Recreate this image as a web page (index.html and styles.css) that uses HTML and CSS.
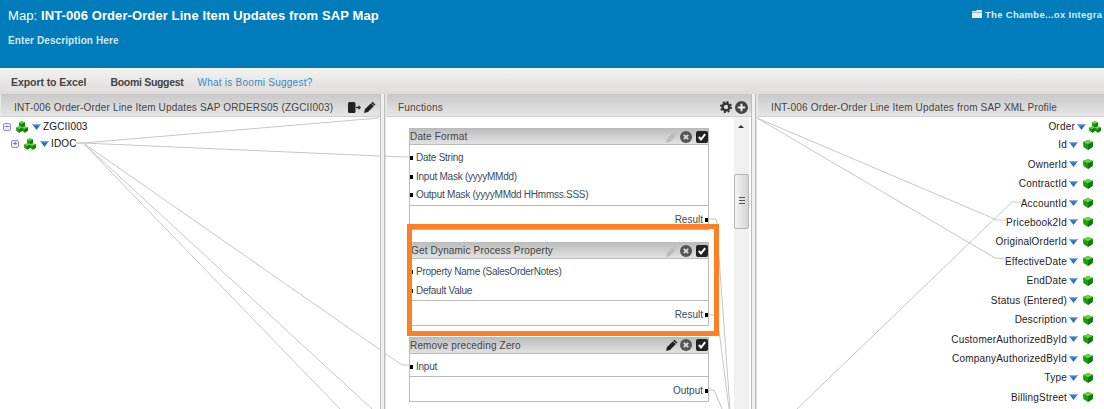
FILE: index.html
```html
<!DOCTYPE html>
<html lang="en">

<head>
    <meta charset="UTF-8">
    <meta name="viewport" content="width=device-width, initial-scale=1.0">
    <title>Map</title>
    <link rel="stylesheet" href="styles.css">
</head>

<body>
    <svg class="icon-defs" width="0" height="0">
        <symbol id="cube" viewBox="0 0 10 10">
            <path d="M5 0 10 2 9.6 7 5 10 .4 7 0 2Z" fill="#1c9a10" />
            <path d="M5 0 10 2 5 4.2 0 2Z" fill="#62d63a" />
            <path d="M10 2 5 4.2V10L9.6 7Z" fill="#0d7a0d" />
        </symbol>
        <symbol id="cubes" viewBox="0 0 12 12">
            <use href="#cube" x="2.75" y="0" width="6.5" height="7" />
            <use href="#cube" x="0" y="5" width="6.5" height="7" />
            <use href="#cube" x="5.5" y="5" width="6.5" height="7" />
        </symbol>
        <symbol id="arrow" viewBox="0 0 9 6">
            <path d="M0 0H9L4.5 6Z" fill="#2f72c4" />
            <path d="M0 0H9L8 1.2H1Z" fill="#7fb0e8" />
        </symbol>
        <symbol id="pencil" viewBox="0 0 12 12">
            <path d="M0 12 1 8 8.5 .8 11.4 3.6 4 11Z" fill="currentColor" />
            <path d="M7.3 2.2 10 4.8" stroke="#ddd" stroke-width=".8" />
        </symbol>
        <symbol id="cross" viewBox="0 0 12 12">
            <circle cx="6" cy="6" r="6" fill="#555" />
            <path d="M3.8 3.8 8.2 8.2M8.2 3.8 3.8 8.2" stroke="#ddd" stroke-width="1.8" />
        </symbol>
        <symbol id="check" viewBox="0 0 12 12">
            <rect width="12" height="12" rx="2" fill="#222" />
            <path d="M2.8 6 5 8.4 9.2 3.2" stroke="#fff" stroke-width="2" fill="none" />
        </symbol>
        <symbol id="gear" viewBox="0 0 12 12">
            <circle cx="6" cy="6" r="3.4" fill="none" stroke="#333" stroke-width="2.4" />
            <circle cx="6" cy="6" r="5" fill="none" stroke="#333" stroke-width="2" stroke-dasharray="2 1.93" />
        </symbol>
        <symbol id="plus" viewBox="0 0 12 12">
            <circle cx="6" cy="6" r="6" fill="#444" />
            <path d="M6 2.6V9.4M2.6 6H9.4" stroke="#eee" stroke-width="1.8" />
        </symbol>
        <symbol id="export" viewBox="0 0 13 11">
            <rect width="7.5" height="11" rx="1.5" fill="#222" />
            <path d="M8 5.5H11" stroke="#222" stroke-width="1.4" />
            <path d="M10.5 3 13 5.5 10.5 8Z" fill="#222" />
        </symbol>
    </svg>

    <header class="top-bar">
        <div class="top-text">
            <h1 class="map-title">Map: <b>INT-006 Order-Order Line Item Updates from SAP Map</b></h1>
            <p class="map-desc">Enter Description Here</p>
        </div>
        <div class="account">
            <svg class="account-icon" viewBox="0 0 10 9" width="10" height="9">
                <path d="M0 1H4L5 0H10V8H0Z" fill="#e6eef3" />
                <path d="M0 2.5H10" stroke="#7d9db0" stroke-width=".7" />
            </svg>
            <span>The Chambe...ox Integra</span>
        </div>
    </header>

    <nav class="tool-bar">
        <span class="tool tool-export">Export to Excel</span>
        <span class="tool tool-suggest">Boomi Suggest</span>
        <span class="tool-link">What is Boomi Suggest?</span>
    </nav>

    <main class="panes">
        <section class="pane pane-left">
            <div class="pane-head">
                <span>INT-006 Order-Order Line Item Updates SAP ORDERS05 (ZGCII003)</span>
                <span class="head-icons">
                    <svg class="i-export"><use href="#export" /></svg>
                    <svg class="i-head pencil-dark"><use href="#pencil" /></svg>
                </span>
            </div>
            <div class="tree">
                <div class="tree-row">
                    <span class="toggle">&minus;</span>
                    <svg class="i-cubes"><use href="#cubes" /></svg>
                    <svg class="i-arrow"><use href="#arrow" /></svg>
                    <span>ZGCII003</span>
                </div>
                <div class="tree-row tree-child">
                    <span class="toggle toggle-plus">+</span>
                    <svg class="i-cubes"><use href="#cubes" /></svg>
                    <svg class="i-arrow"><use href="#arrow" /></svg>
                    <span>IDOC</span>
                </div>
            </div>
        </section>

        <div class="splitter"></div>

        <section class="pane pane-center">
            <div class="pane-head">
                <span>Functions</span>
                <span class="head-icons">
                    <svg class="i-head"><use href="#gear" /></svg>
                    <svg class="i-head i-plus"><use href="#plus" /></svg>
                </span>
            </div>
            <div class="center-body">
                <div class="functions">
                    <div class="fn-card">
                        <div class="fn-head">
                            <span>Date Format</span>
                            <svg class="i-btn pencil-faded"><use href="#pencil" /></svg>
                            <svg class="i-btn"><use href="#cross" /></svg>
                            <svg class="i-btn"><use href="#check" /></svg>
                        </div>
                        <div class="fn-inputs">
                            <div class="fn-row">Date String</div>
                            <div class="fn-row">Input Mask (yyyyMMdd)</div>
                            <div class="fn-row">Output Mask (yyyyMMdd HHmmss.SSS)</div>
                        </div>
                        <div class="fn-outputs">
                            <div class="fn-row">Result</div>
                        </div>
                    </div>

                    <div class="fn-card fn-card-property">
                        <div class="fn-head fn-head-tight">
                            <span>Get Dynamic Process Property</span>
                            <svg class="i-btn pencil-faded"><use href="#pencil" /></svg>
                            <svg class="i-btn"><use href="#cross" /></svg>
                            <svg class="i-btn"><use href="#check" /></svg>
                        </div>
                        <div class="fn-inputs">
                            <div class="fn-row">Property Name (SalesOrderNotes)</div>
                            <div class="fn-row">Default Value</div>
                        </div>
                        <div class="fn-outputs">
                            <div class="fn-row">Result</div>
                        </div>
                    </div>

                    <div class="fn-card">
                        <div class="fn-head">
                            <span>Remove preceding Zero</span>
                            <svg class="i-btn pencil-dark"><use href="#pencil" /></svg>
                            <svg class="i-btn"><use href="#cross" /></svg>
                            <svg class="i-btn"><use href="#check" /></svg>
                        </div>
                        <div class="fn-inputs">
                            <div class="fn-row">Input</div>
                        </div>
                        <div class="fn-outputs">
                            <div class="fn-row">Output</div>
                        </div>
                    </div>
                </div>
                <div class="scrollbar">
                    <span class="scroll-up"></span>
                    <span class="scroll-thumb"></span>
                </div>
            </div>
        </section>

        <div class="splitter"></div>

        <section class="pane pane-right">
            <div class="pane-head">
                <span>INT-006 Order-Order Line Item Updates from SAP XML Profile</span>
            </div>
            <div class="profile">
                <div class="profile-root">Order<svg class="i-arrow"><use href="#arrow" /></svg><svg class="i-cubes"><use href="#cubes" /></svg></div>
                <div class="profile-row">Id<svg class="i-arrow"><use href="#arrow" /></svg><svg class="i-cube"><use href="#cube" /></svg></div>
                <div class="profile-row">OwnerId<svg class="i-arrow"><use href="#arrow" /></svg><svg class="i-cube"><use href="#cube" /></svg></div>
                <div class="profile-row">ContractId<svg class="i-arrow"><use href="#arrow" /></svg><svg class="i-cube"><use href="#cube" /></svg></div>
                <div class="profile-row">AccountId<svg class="i-arrow"><use href="#arrow" /></svg><svg class="i-cube"><use href="#cube" /></svg></div>
                <div class="profile-row">Pricebook2Id<svg class="i-arrow"><use href="#arrow" /></svg><svg class="i-cube"><use href="#cube" /></svg></div>
                <div class="profile-row">OriginalOrderId<svg class="i-arrow"><use href="#arrow" /></svg><svg class="i-cube"><use href="#cube" /></svg></div>
                <div class="profile-row">EffectiveDate<svg class="i-arrow"><use href="#arrow" /></svg><svg class="i-cube"><use href="#cube" /></svg></div>
                <div class="profile-row">EndDate<svg class="i-arrow"><use href="#arrow" /></svg><svg class="i-cube"><use href="#cube" /></svg></div>
                <div class="profile-row">Status (Entered)<svg class="i-arrow"><use href="#arrow" /></svg><svg class="i-cube"><use href="#cube" /></svg></div>
                <div class="profile-row">Description<svg class="i-arrow"><use href="#arrow" /></svg><svg class="i-cube"><use href="#cube" /></svg></div>
                <div class="profile-row">CustomerAuthorizedById<svg class="i-arrow"><use href="#arrow" /></svg><svg class="i-cube"><use href="#cube" /></svg></div>
                <div class="profile-row">CompanyAuthorizedById<svg class="i-arrow"><use href="#arrow" /></svg><svg class="i-cube"><use href="#cube" /></svg></div>
                <div class="profile-row">Type<svg class="i-arrow"><use href="#arrow" /></svg><svg class="i-cube"><use href="#cube" /></svg></div>
                <div class="profile-row">BillingStreet<svg class="i-arrow"><use href="#arrow" /></svg><svg class="i-cube"><use href="#cube" /></svg></div>
            </div>
        </section>
    </main>

    <!-- mapping lines drawn over the panes -->
    <svg class="wires" viewBox="0 0 1104 409" width="1104" height="409">
        <path d="M76 143H83L379 118" />
        <path d="M76 143H83L380 156L405 157H410" />
        <path d="M83 143L402 365H410" />
        <path d="M83 143L372 409" />
        <path d="M83 143L340 409" />
        <path d="M708 219H716L718 228" />
        <path d="M719 257L730 409" />
        <path d="M708 315H716L719 330L729 409" />
        <path d="M708 390H714L722 409" />
        <path d="M757 118L997 220H1007" />
        <path d="M757 118L995 258L1005 259H1015" />
        <path d="M797 409L1012 202H1021" />
    </svg>

    <div class="highlight"></div>
</body>

</html>
```

FILE: styles.css
```css
body {
    margin: 0;
    width: 1104px;
    height: 409px;
    overflow: hidden;
    position: relative;
    font-family: "Liberation Sans", Arial, sans-serif;
    font-size: 10px;
    color: #444;
    background-color: #e2dfdd;
}

.icon-defs {
    position: absolute;
}

.top-bar {
    height: 68px;
    background-color: #007cba;
    color: #fff;
    display: flex;
    justify-content: space-between;
    box-sizing: border-box;
    padding: 8px 0 0 8px;
}

.map-title {
    margin: 0;
    font-size: 13px;
    line-height: 16px;
    font-weight: normal;
    letter-spacing: 0.1px;
}

.map-title b {
    font-weight: bold;
}

.map-desc {
    margin: 9px 0 0;
    font-size: 10px;
    line-height: 16px;
    font-weight: bold;
    color: #d4e8f2;
    letter-spacing: 0.1px;
}

.account {
    width: 132px;
    white-space: nowrap;
    display: flex;
    align-items: flex-start;
    gap: 3px;
    font-size: 9.5px;
    font-weight: bold;
    line-height: 14px;
    color: #dcebf3;
    letter-spacing: 0.3px;
}

.account-icon {
    flex: none;
    margin-top: 2px;
}

.tool-bar {
    height: 26px;
    display: flex;
    align-items: center;
    box-sizing: border-box;
    padding: 2px 0 0 11px;
    background-image: linear-gradient(#f4f3f2, #dedbd9);
    font-size: 10.5px;
}

.tool {
    font-weight: bold;
    color: #444;
}

.tool-export {
    margin-right: 24px;
    letter-spacing: -0.07px;
}

.tool-suggest {
    margin-right: 14px;
    letter-spacing: -0.3px;
}

.tool-link {
    color: #2f8dc4;
    font-size: 10px;
    letter-spacing: 0.25px;
}

.panes {
    display: flex;
    height: 315px;
}

.pane {
    display: flex;
    flex-direction: column;
    background-color: #fff;
}

.pane-left {
    width: 380px;
}

.pane-center {
    width: 365px;
    margin-left: 1px;
}

.pane-right {
    flex: 1;
    margin-left: 1px;
}

.splitter {
    width: 5px;
    flex: none;
    position: relative;
    z-index: 2;
    box-sizing: border-box;
    background-color: #f0f0f0;
    border-left: 1px solid #bdbdbd;
    border-right: 1px solid #bdbdbd;
}

.pane-head {
    height: 23px;
    flex: none;
    box-sizing: border-box;
    display: flex;
    align-items: center;
    justify-content: space-between;
    padding: 4px 4px 0 13px;
    background-image: linear-gradient(#c8c8c8, #e6e6e6);
    border-bottom: 1px solid #cfcfcf;
    border-left: 1px solid #e8e8e8;
    font-size: 10px;
    letter-spacing: 0.17px;
    color: #444;
}

.pane-center .pane-head {
    padding-left: 11px;
    padding-right: 3px;
}

.head-icons {
    display: flex;
    align-items: center;
    gap: 3px;
}

.i-export {
    width: 13px;
    height: 11px;
}

.i-head {
    width: 12px;
    height: 12px;
}

.i-plus {
    width: 13px;
    height: 13px;
}

.pencil-dark {
    color: #222;
}

.pencil-faded {
    color: #bbb;
}

/* left tree */
.tree {
    padding-top: 1px;
    color: #111;
}

.tree-row {
    display: flex;
    align-items: center;
    height: 17px;
    padding-left: 3px;
    letter-spacing: 0.15px;
}

.tree-child {
    padding-left: 11px;
}

.toggle {
    width: 6px;
    height: 6px;
    border: 1px solid #8f8fc4;
    border-radius: 2px;
    background-color: #e9e9f6;
    color: #33339a;
    font-size: 8px;
    line-height: 6px;
    text-align: center;
    margin-right: 5px;
    letter-spacing: 0;
}

.i-cubes {
    width: 12px;
    height: 12px;
    flex: none;
}

.i-cube {
    width: 10px;
    height: 10px;
    flex: none;
    margin-left: 5px;
}

.i-arrow {
    width: 9px;
    height: 6px;
    flex: none;
    margin: 0 2px 0 4px;
}

/* functions */
.center-body {
    flex: 1;
    display: flex;
    min-height: 0;
}

.functions {
    flex: 1;
    padding: 11px 0 0 23px;
}

.fn-card {
    width: 300px;
    box-sizing: border-box;
    border: 1px solid #bbb;
    margin-bottom: 12px;
    background-color: #fff;
}

.fn-card-property {
    margin-bottom: 11px;
}

.fn-head {
    height: 15px;
    display: flex;
    align-items: center;
    background-image: linear-gradient(#bdbdbd, #e2e2e2);
    border-bottom: 1px solid #bbb;
    font-size: 10px;
    letter-spacing: 0.17px;
    color: #444;
}

.fn-head span {
    flex: 1;
}

.fn-head-tight span {
    padding-left: 1px;
}

.i-btn {
    width: 12px;
    height: 12px;
    flex: none;
    margin-left: 2px;
}

.i-btn:last-child {
    margin-left: 4px;
}

.fn-inputs {
    padding-top: 4px;
    border-bottom: 1px solid #bbb;
}

.fn-outputs {
    padding: 4px 0 1px;
}

.fn-row {
    position: relative;
    height: 18.5px;
    line-height: 18.5px;
    padding-left: 6px;
    letter-spacing: -0.25px;
    color: #3c4a5a;
}

.fn-row::before {
    content: "";
    position: absolute;
    left: 0;
    top: 7px;
    width: 3px;
    height: 4px;
    background-color: #000;
}

.fn-outputs .fn-row {
    text-align: right;
    line-height: 20.5px;
    letter-spacing: 0;
    padding: 0 5px 0 0;
}

.fn-outputs .fn-row::before {
    left: auto;
    right: 0;
    top: 8px;
}

.scrollbar {
    width: 15px;
    flex: none;
    margin-right: 2px;
    background-color: #f0f0f0;
    position: relative;
}

.scroll-up {
    position: absolute;
    left: 4px;
    top: 8px;
    border-left: 3.5px solid transparent;
    border-right: 3.5px solid transparent;
    border-bottom: 3.5px solid #333;
}

.scroll-thumb {
    position: absolute;
    left: 0;
    top: 57px;
    width: 15px;
    height: 55px;
    box-sizing: border-box;
    border: 1px solid #b5b5b5;
    border-radius: 2px;
    background-image:
        linear-gradient(#555, #555),
        linear-gradient(#555, #555),
        linear-gradient(#555, #555),
        linear-gradient(90deg, #f4f4f4, #d4d4d4);
    background-repeat: no-repeat;
    background-size: 6px 1px, 6px 1px, 6px 1px, 100% 100%;
    background-position: center 22px, center 25px, center 28px, 0 0;
}

/* right profile */
.profile {
    color: #222;
    letter-spacing: 0.21px;
    padding-top: 1px;
}

.profile-root,
.profile-row {
    display: flex;
    align-items: center;
    justify-content: flex-end;
    white-space: nowrap;
}

.profile-root {
    height: 17px;
    padding-right: 3px;
}

.profile-root .i-arrow {
    margin: 0 3px 0 2px;
}

.profile-row {
    height: 19.45px;
    padding-right: 11px;
}

.profile-row .i-arrow {
    margin: 0 0 0 2px;
}

.wires {
    position: absolute;
    left: 0;
    top: 0;
    z-index: 1;
    pointer-events: none;
}

.wires path {
    fill: none;
    stroke: #c6c6c6;
    stroke-width: 1;
}

.highlight {
    position: absolute;
    left: 407px;
    top: 224px;
    width: 312px;
    height: 112px;
    box-sizing: border-box;
    border: 5px solid #ff7f27;
    z-index: 3;
}
```
